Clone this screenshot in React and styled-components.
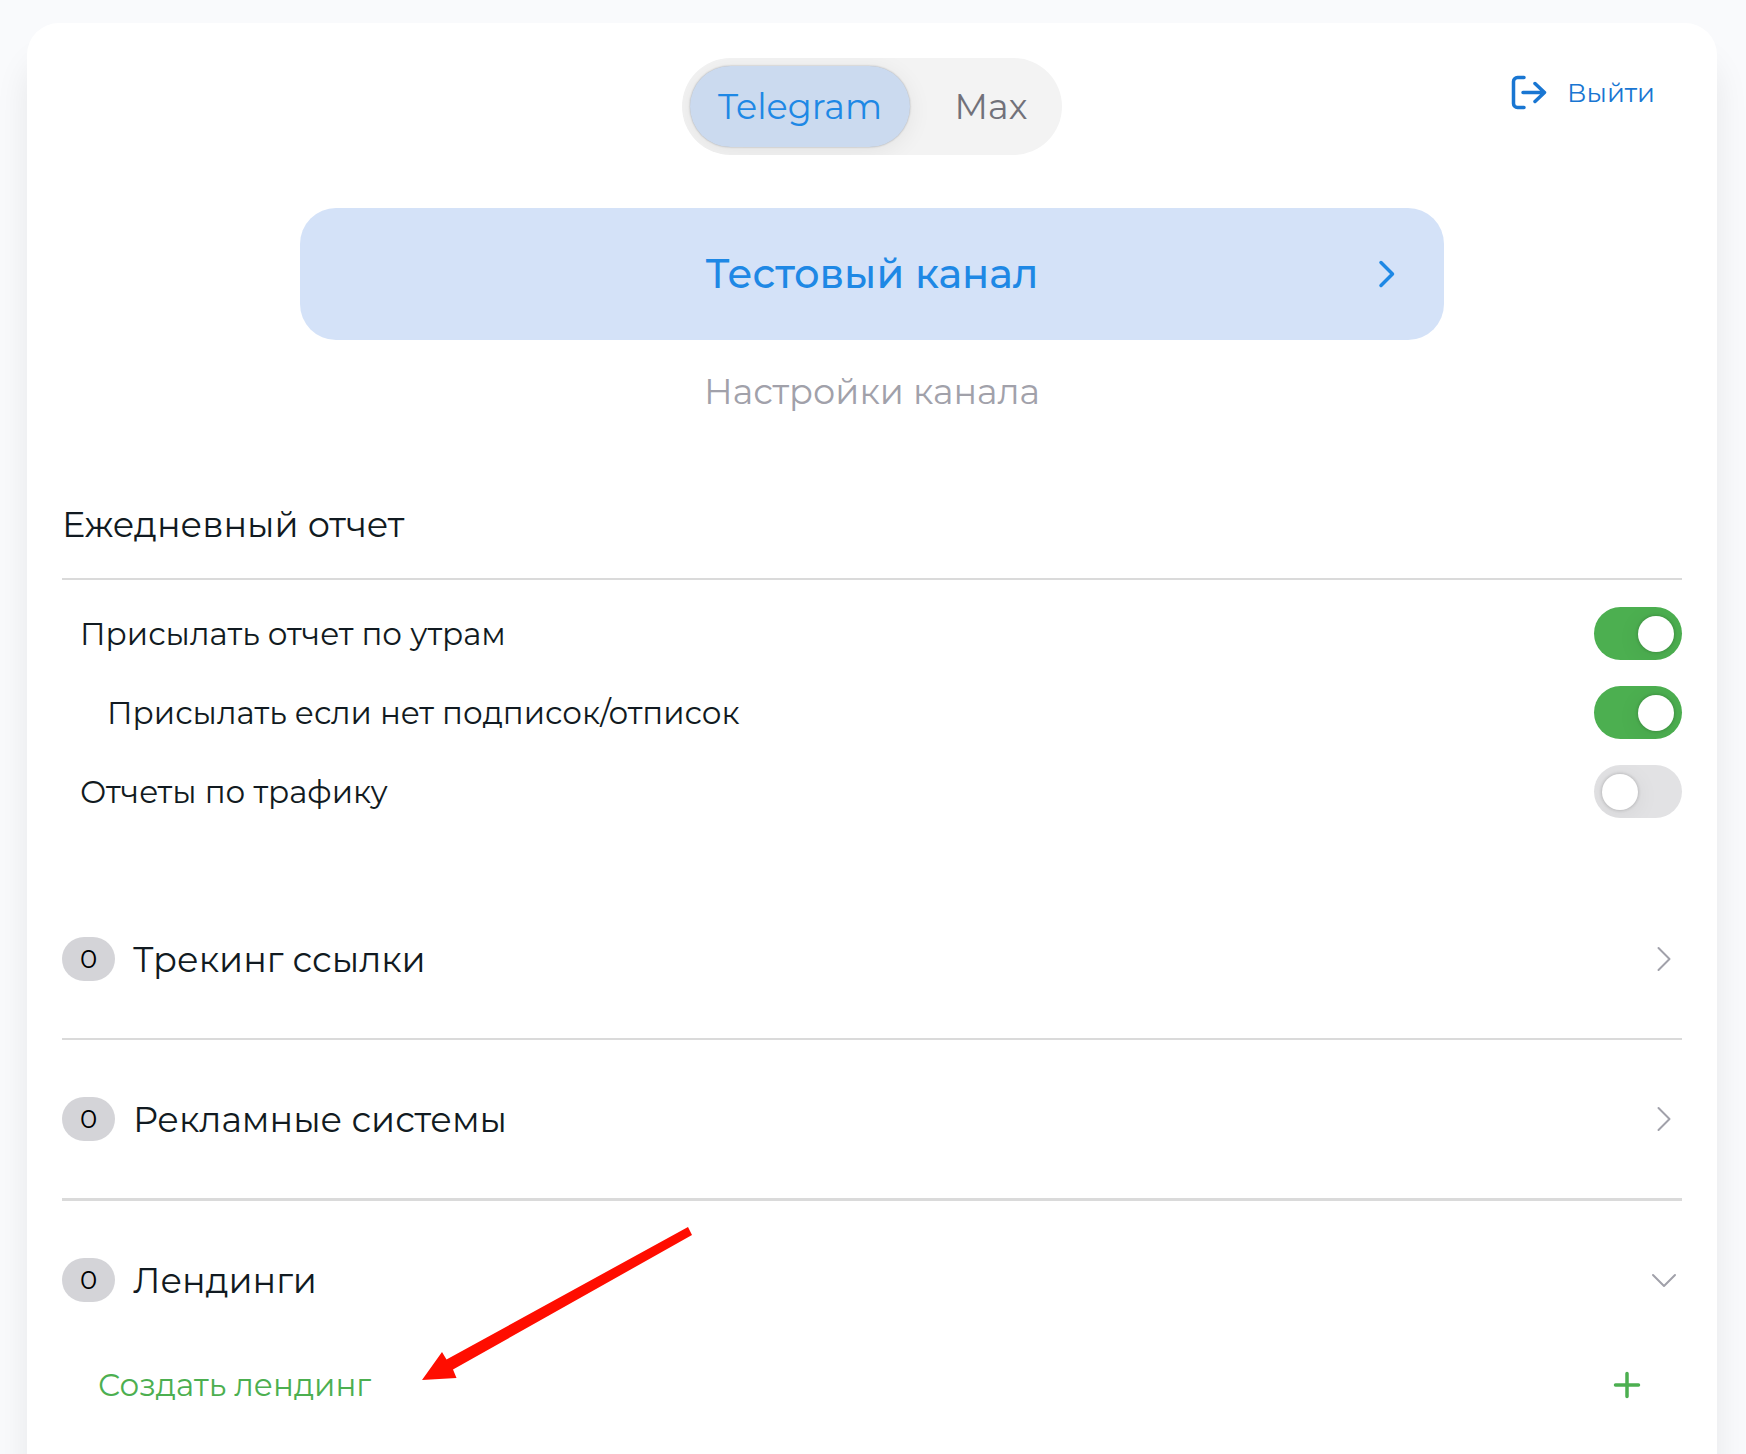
import React, { useState } from "react";
import styled, { createGlobalStyle } from "styled-components";

const GlobalStyle = createGlobalStyle`
  * { box-sizing: border-box; }
  body {
    margin: 0;
    background: #f9fafc;
    color: #111a21;
    font-family: Montserrat, Inter, "Open Sans", sans-serif;
    font-weight: 400;
  }
  button { font: inherit; color: inherit; border: 0; background: none; padding: 0; cursor: pointer; }
  h1, h2, p { margin: 0; font-weight: inherit; }
`;

const Page = styled.div`
  display: flex;
  min-height: 100vh;
  padding: 23px 29px 0 27px;
  overflow: hidden;
`;

const Card = styled.main`
  flex: 1;
  min-width: 0;
  padding: 35px 35px 0;
  background: #fff;
  border-radius: 32px 32px 0 0;
  box-shadow: 0 36px 34px rgba(0, 0, 0, 0.08);
`;

const Header = styled.header`
  display: grid;
  grid-template-columns: 1fr auto 1fr;
  align-items: start;
`;

const Tabs = styled.div`
  grid-column: 2;
  display: grid;
  grid-template-columns: 220px 126px;
  gap: 18px;
  padding: 8px;
  border-radius: 49px;
  background: #f3f3f3;
  overflow: hidden;
`;

const Tab = styled.button`
  height: 81px;
  border-radius: 41px;
  font-size: 35px;
  color: ${(p) => (p.$active ? "#1e88e5" : "#71717a")};
  background: ${(p) => (p.$active ? "#cbdaef" : "transparent")};
  box-shadow: ${(p) =>
    p.$active ? "0 0 2px rgba(0,0,0,.3), 0 4px 24px rgba(0,0,0,.07)" : "none"};
`;

const Logout = styled.button`
  grid-column: 3;
  justify-self: end;
  display: flex;
  align-items: center;
  gap: 20px;
  height: 70px;
  margin-right: 27px;
  font-size: 26px;
  color: #1976d2;
`;

const Channel = styled.button`
  display: grid;
  grid-template-columns: 1fr auto 1fr;
  align-items: center;
  width: 100%;
  max-width: 1144px;
  height: 132px;
  margin: 53px auto 0;
  padding: 0 45px;
  border-radius: 36px;
  background: #d4e2f8;
  color: #1e88e5;
  font-size: 40px;
  line-height: 48px;
  font-weight: 500;

  span { grid-column: 2; }
  svg { justify-self: end; }
`;

const Subtitle = styled.p`
  margin-top: 28px;
  line-height: 48px;
  font-size: 35px;
  text-align: center;
  color: #a1a1aa;
`;

const Heading = styled.h2`
  margin-top: 85px;
  padding-bottom: 29px;
  border-bottom: 2px solid #dadada;
  font-size: 35px;
  line-height: 48px;
`;

const Options = styled.div`
  padding-top: 14px;
  margin-bottom: 49px;
`;

const Option = styled.label`
  display: flex;
  align-items: center;
  justify-content: space-between;
  height: 79px;
  padding-left: ${(p) => (p.$nested ? 45 : 18)}px;
  font-size: 31px;
`;

const Switch = styled.input`
  appearance: none;
  display: flex;
  align-items: center;
  justify-content: ${(p) => (p.checked ? "flex-end" : "flex-start")};
  width: 88px;
  height: 53px;
  margin: 0;
  padding: 0 8px;
  border-radius: 27px;
  overflow: hidden;
  background: ${(p) => (p.checked ? "#4caf50" : "#e2e2e4")};
  cursor: pointer;

  &::before {
    content: "";
    width: 36px;
    height: 36px;
    border-radius: 50%;
    background: #fff;
    box-shadow: 0 0 3px 1px rgba(0, 0, 0, 0.14), 0 4px 24px rgba(0, 0, 0, 0.07);
  }
`;

const Section = styled.section`
  position: relative;
  border-bottom: ${(p) => p.$divider}px solid #dadada;
`;

const SectionToggle = styled.button`
  display: flex;
  align-items: center;
  width: 100%;
  height: 158px;
  gap: 18px;
  font-size: 35px;

  svg { margin-left: auto; color: #a1a1aa; }
`;

const Badge = styled.span`
  display: grid;
  place-items: center;
  width: 53px;
  height: 44px;
  border-radius: 22px;
  background: #d4d4d8;
  color: #000;
  font-size: 26px;
`;

const CreateButton = styled.button`
  display: flex;
  align-items: center;
  justify-content: space-between;
  width: 100%;
  height: 52px;
  padding: 0 37px 0 36px;
  font-size: 31px;
  color: #4caf50;
`;

const Pointer = styled.svg`
  position: absolute;
  left: 360px;
  top: 26px;
  pointer-events: none;
`;

const Icon = ({ size = 36, width = 2, children }) => (
  <svg
    width={size}
    height={size}
    viewBox="0 0 36 36"
    fill="none"
    stroke="currentColor"
    strokeWidth={width}
    strokeLinecap="round"
    strokeLinejoin="round"
    aria-hidden="true"
  >
    {children}
  </svg>
);

const sections = [
  { id: "links", title: "Трекинг ссылки", count: 0, divider: 2 },
  { id: "ads", title: "Рекламные системы", count: 0, divider: 3 },
  { id: "landings", title: "Лендинги", count: 0, divider: 0 },
];

export default function App() {
  const [tab, setTab] = useState("Telegram");
  const [open, setOpen] = useState("landings");
  const [options, setOptions] = useState([
    { label: "Присылать отчет по утрам", on: true },
    { label: "Присылать если нет подписок/отписок", on: true, nested: true },
    { label: "Отчеты по трафику", on: false },
  ]);
  const toggle = (i) =>
    setOptions(options.map((o, n) => (n === i ? { ...o, on: !o.on } : o)));

  return (
    <Page>
      <GlobalStyle />
      <Card>
        <Header>
          <Tabs role="tablist">
            {["Telegram", "Max"].map((name) => (
              <Tab
                key={name}
                role="tab"
                aria-selected={tab === name}
                $active={tab === name}
                onClick={() => setTab(name)}
              >
                {name}
              </Tab>
            ))}
          </Tabs>
          <Logout>
            <Icon width={3.5}>
              <path d="M13 2.5H6.5a4 4 0 0 0-4 4v22a4 4 0 0 0 4 4H13M12 17.5h21.500M24 8.500l9.500 9-9.500 9" />
            </Icon>
            Выйти
          </Logout>
        </Header>

        <Channel>
          <span>Тестовый канал</span>
          <Icon width={3.5}>
            <path d="M18 6.500l11.500 11.500-11.500 11.500" />
          </Icon>
        </Channel>
        <Subtitle>Настройки канала</Subtitle>

        <Heading>Ежедневный отчет</Heading>
        <Options>
          {options.map((o, i) => (
            <Option key={o.label} $nested={o.nested}>
              {o.label}
              <Switch type="checkbox" role="switch" checked={o.on} onChange={() => toggle(i)} />
            </Option>
          ))}
        </Options>

        {sections.map((s) => (
          <Section key={s.id} $divider={s.divider}>
            <SectionToggle
              aria-expanded={open === s.id}
              onClick={() => setOpen(open === s.id ? "" : s.id)}
            >
              <Badge>{s.count}</Badge>
              {s.title}
              <Icon width={2}>
                <path d={open === s.id ? "M7 13l11 11 11-11" : "M12.500 7l11 11-11 11"} />
              </Icon>
            </SectionToggle>
            {s.id === "landings" && open === s.id && (
              <>
                <CreateButton>
                  Создать лендинг
                  <Icon width={3.5}>
                    <path d="M18 6.500v23M6.500 18h23" />
                  </Icon>
                </CreateButton>
                <Pointer width="270" height="153" viewBox="0 0 270 153" aria-hidden="true">
                  <path fill="#ff0d00" d="M0 153l20-28 4.500 7.500L266 0l4 8L31 142.500l3.500 8.500z" />
                </Pointer>
              </>
            )}
          </Section>
        ))}
      </Card>
    </Page>
  );
}
